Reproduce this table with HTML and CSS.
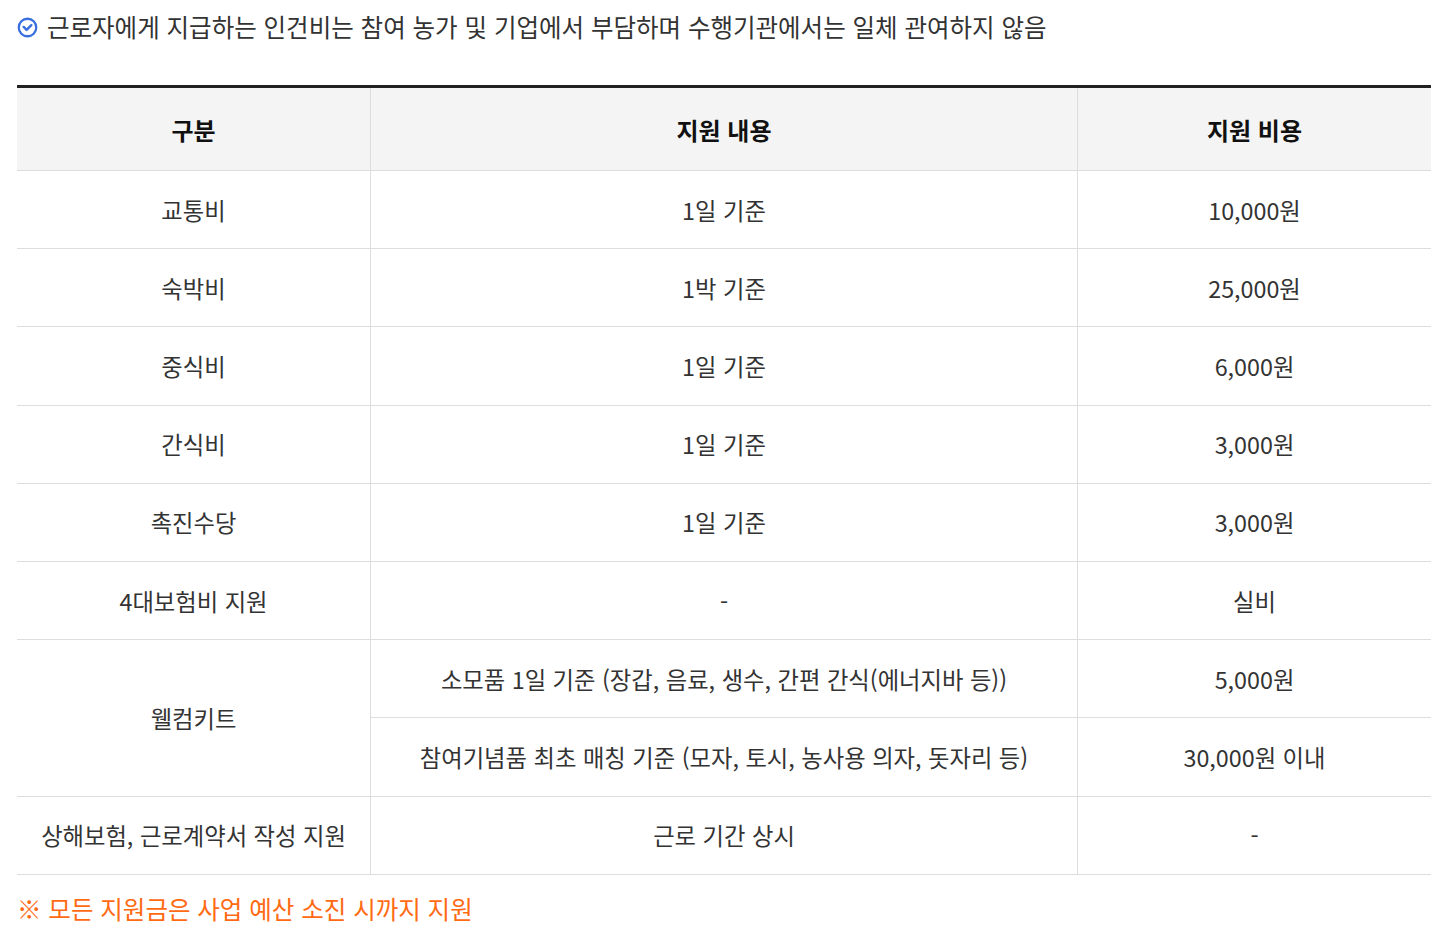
FILE: index.html
```html
<!DOCTYPE html>
<html lang="ko">
<head>
<meta charset="utf-8">
<link rel="stylesheet" href="styles.css">
</head>
<body>
<div class="wrap">
  <p class="notice">
    <svg class="ico" viewBox="0 0 24 24" width="21" height="21"><circle cx="12" cy="12" r="10" fill="none" stroke="#3a6fe0" stroke-width="2.6"/><path d="M7.6 11.4l3.4 3.4 5.4-5.4" fill="none" stroke="#3a6fe0" stroke-width="2.8" stroke-linecap="round" stroke-linejoin="round"/></svg>
    <span>근로자에게 지급하는 인건비는 참여 농가 및 기업에서 부담하며 수행기관에서는 일체 관여하지 않음</span>
  </p>
  <table class="tbl">
    <colgroup><col class="c1"><col class="c2"><col class="c3"></colgroup>
    <thead>
      <tr><th>구분</th><th>지원 내용</th><th>지원 비용</th></tr>
    </thead>
    <tbody>
      <tr><td>교통비</td><td>1일 기준</td><td>10,000원</td></tr>
      <tr><td>숙박비</td><td>1박 기준</td><td>25,000원</td></tr>
      <tr><td>중식비</td><td>1일 기준</td><td>6,000원</td></tr>
      <tr><td>간식비</td><td>1일 기준</td><td>3,000원</td></tr>
      <tr><td>촉진수당</td><td>1일 기준</td><td>3,000원</td></tr>
      <tr><td>4대보험비 지원</td><td>-</td><td>실비</td></tr>
      <tr><td rowspan="2">웰컴키트</td><td>소모품 1일 기준 (장갑, 음료, 생수, 간편 간식(에너지바 등))</td><td>5,000원</td></tr>
      <tr><td>참여기념품 최초 매칭 기준 (모자, 토시, 농사용 의자, 돗자리 등)</td><td>30,000원 이내</td></tr>
      <tr><td>상해보험, 근로계약서 작성 지원</td><td>근로 기간 상시</td><td>-</td></tr>
    </tbody>
  </table>
  <p class="note">※ 모든 지원금은 사업 예산 소진 시까지 지원</p>
</div>
</body>
</html>
```
FILE: styles.css
```css
html, body { margin: 0; padding: 0; background: #fff; }
body {
  font-family: "Noto Sans CJK KR", "Noto Sans", sans-serif;
  color: #333;
}
.wrap { padding: 0 6px 0 17px; }
.notice {
  margin: 0;
  padding-top: 10px;
  display: flex;
  align-items: center;
  gap: 9px;
  font-size: 24.5px;
  line-height: 34px;
  color: #333;
}
.ico { flex: none; }
.tbl {
  margin-top: 41px;
  width: 100%;
  border-collapse: collapse;
  table-layout: fixed;
  border-top: 3px solid #222;
}
.c1 { width: 25%; }
.c2 { width: 50%; }
.c3 { width: 25%; }
.tbl th, .tbl td {
  text-align: center;
  border: 1px solid #ddd;
}
.tbl tr > :first-child { border-left: none; }
.tbl tr > :last-child { border-right: none; }
.tbl th {
  background: #f4f4f4;
  color: #111;
  font-weight: 700;
  font-size: 24px;
  height: 82px;
  padding: 0;
  border-top: none;
}
.tbl td {
  color: #333;
  font-weight: 400;
  font-size: 23.3px;
  height: 77.2px;
  padding: 0;
}
.note {
  margin: 17px 0 0;
  font-size: 24.5px;
  line-height: 34px;
  color: #ff6a13;
}
```
